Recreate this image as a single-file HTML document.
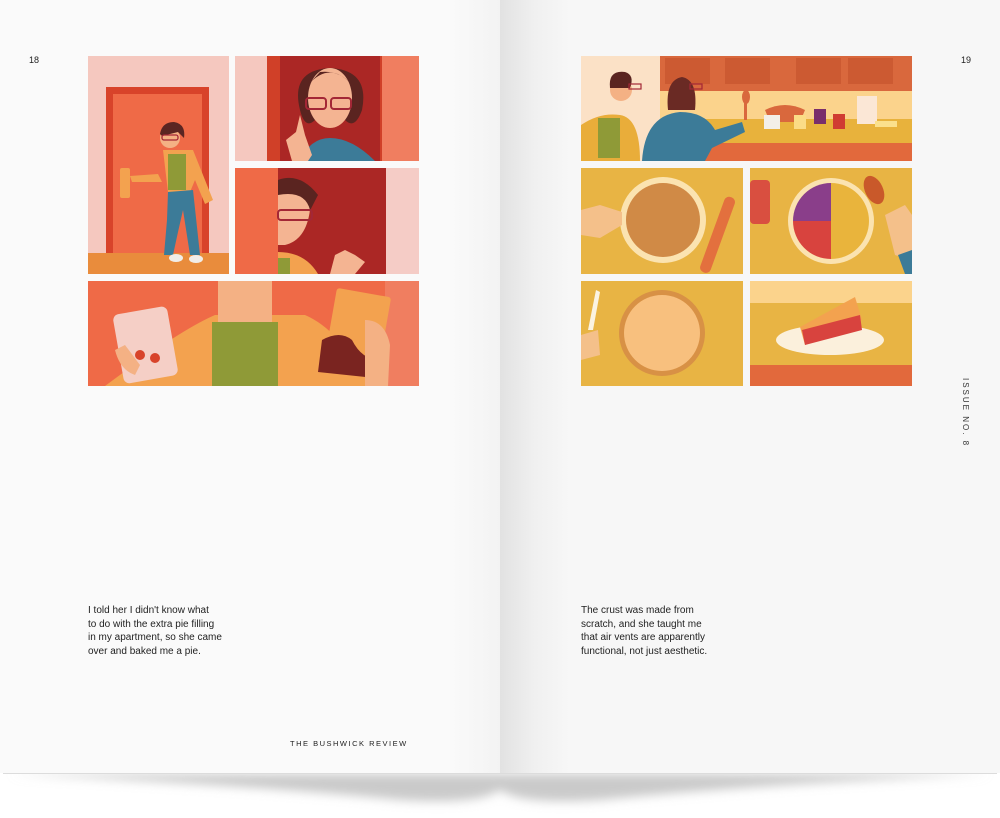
<!DOCTYPE html>
<html><head><meta charset="utf-8"><style>
html,body{margin:0;padding:0;background:#fff;width:1000px;height:818px;overflow:hidden;font-family:"Liberation Sans",sans-serif}
.abs{position:absolute}
.txt{font-size:10px;line-height:13.5px;color:#222}
</style></head><body>
<div class="abs" style="left:0;top:0;width:1000px;height:818px">
<svg width="1000" height="818" class="abs" style="left:0;top:0">
<defs>
<linearGradient id="sp" x1="0" x2="1"><stop offset="0" stop-color="#e2e2e2"/><stop offset="0.5" stop-color="#f0f0f0"/><stop offset="1" stop-color="#f7f7f7"/></linearGradient>
<linearGradient id="lp" x1="0" x2="1"><stop offset="0" stop-color="#fafafa"/><stop offset="0.9" stop-color="#fafafa"/><stop offset="1" stop-color="#f3f3f3"/></linearGradient>
<filter id="bl" x="-10%" y="-100%" width="120%" height="300%"><feGaussianBlur stdDeviation="5"/></filter>
</defs>
<!-- shadow -->
<path d="M10 774 Q250 785 400 800 Q480 805 500 790 Q520 805 600 800 Q750 785 990 774 Z" fill="#cacaca" filter="url(#bl)"/>
<rect x="0" y="0" width="500" height="773" fill="url(#lp)"/>
<rect x="500" y="0" width="500" height="773" fill="#f7f7f7"/>
<rect x="500" y="0" width="70" height="773" fill="url(#sp)"/>
<line x1="3" y1="773.5" x2="997" y2="773.5" stroke="#dcdcdc"/>

<!-- Panel A -->
<rect x="88" y="56" width="141" height="218" fill="#f5c8bf"/>
<rect x="106" y="87" width="103" height="166" fill="#d8432a"/>
<rect x="113" y="94" width="89" height="159" fill="#ef6a47"/>
<rect x="88" y="253" width="141" height="21" fill="#e98c3c"/>
<rect x="120" y="168" width="10" height="30" rx="2" fill="#f3a24f"/>
<path d="M130 176 L158 174 L162 182 L132 182Z" fill="#f3a24f"/>
<path d="M163 150 L193 150 L213 200 L205 204 L195 180 L190 192 L168 192 Z" fill="#f3a24f"/>
<rect x="168" y="154" width="18" height="36" fill="#8f9a37"/>
<path d="M168 192 L193 190 L200 255 L190 255 L183 210 L178 232 L173 255 L164 255 L167 220Z" fill="#3c7b98"/>
<ellipse cx="176" cy="258" rx="7" ry="4" fill="#f1ede8"/><ellipse cx="196" cy="259" rx="7" ry="4" fill="#f1ede8"/>
<circle cx="170" cy="138" r="10" fill="#f4b184"/>
<path d="M160 134 Q162 122 174 122 Q186 124 184 138 L178 132 L162 136Z" fill="#5b2522"/>
<rect x="162" y="135" width="16" height="5" rx="2" fill="none" stroke="#a32736" stroke-width="1.3"/>

<!-- Panel B -->
<rect x="235" y="56" width="184" height="105" fill="#f5c8bf"/>
<rect x="267" y="56" width="135" height="105" fill="#d04028"/>
<rect x="280" y="56" width="100" height="105" fill="#ab2725"/>
<rect x="382" y="56" width="37" height="105" fill="#f07e60"/>
<path d="M300 110 Q290 70 330 68 Q370 70 362 110 Q355 130 345 120 L315 120 Q305 130 300 110Z" fill="#5a2420"/>
<ellipse cx="330" cy="98" rx="22" ry="30" fill="#f4b492"/>
<path d="M308 85 Q330 60 352 85 Q340 70 320 72Z" fill="#5a2420"/>
<rect x="306" y="98" width="20" height="11" rx="3" fill="none" stroke="#a32736" stroke-width="2"/>
<rect x="331" y="98" width="20" height="11" rx="3" fill="none" stroke="#a32736" stroke-width="2"/>
<path d="M300 161 Q310 138 330 138 Q352 138 375 161Z" fill="#3c7b98"/>
<path d="M292 161 L286 140 L296 132 L300 115 L305 135 L312 155 L308 161Z" fill="#f4b492"/>

<!-- Panel C -->
<rect x="235" y="168" width="184" height="106" fill="#ef6a47"/>
<rect x="278" y="168" width="108" height="106" fill="#ab2725"/>
<rect x="386" y="168" width="33" height="106" fill="#f5ccc6"/>
<path d="M278 180 Q300 172 318 195 L300 230 L278 230Z" fill="#5a2420"/>
<path d="M278 195 Q305 190 310 210 Q306 240 285 245 L278 245Z" fill="#f4b492"/>
<rect x="278" y="210" width="34" height="10" rx="3" fill="none" stroke="#a32736" stroke-width="2"/>
<path d="M278 274 L278 252 Q305 252 318 274Z" fill="#f3a24f"/>
<rect x="278" y="258" width="12" height="16" fill="#8f9a37"/>
<path d="M330 274 L335 255 L345 250 L355 255 L365 262 L355 274Z" fill="#f4b492"/>

<!-- Panel D -->
<rect x="88" y="281" width="331" height="105" fill="#ef6a47"/>
<rect x="385" y="281" width="34" height="105" fill="#f07e60"/>
<path d="M105 386 Q180 330 215 315 L305 315 Q340 330 370 386Z" fill="#f3a24f"/>
<path d="M218 281 L272 281 L272 330 Q245 345 218 330Z" fill="#f4b184"/>
<rect x="212" y="322" width="66" height="64" fill="#8f9a37"/>
<rect x="118" y="310" width="55" height="70" rx="6" fill="#f5cfc6" transform="rotate(-10 145 345)"/>
<circle cx="155" cy="358" r="5" fill="#d8432a"/><circle cx="140" cy="355" r="5" fill="#d8432a"/>
<path d="M135 375 Q120 370 115 350 L125 345 L140 365Z" fill="#f4b184"/>
<rect x="330" y="292" width="55" height="75" rx="3" fill="#f3a24f" transform="rotate(10 357 330)"/>
<path d="M322 340 Q340 330 352 340 Q362 360 380 360 L375 378 L318 372Z" fill="#7a2420"/>
<path d="M365 320 Q385 320 390 345 L388 386 L365 386 L365 345Z" fill="#f4b184"/>

<!-- Panel E -->
<rect x="581" y="56" width="331" height="105" fill="#f3a24f"/>
<rect x="660" y="56" width="252" height="35" fill="#d9683d"/>
<rect x="665" y="58" width="45" height="26" fill="#cc5a32"/><rect x="725" y="58" width="45" height="26" fill="#cc5a32"/><rect x="796" y="58" width="45" height="26" fill="#cc5a32"/><rect x="848" y="58" width="45" height="26" fill="#cc5a32"/>
<rect x="660" y="91" width="252" height="28" fill="#fbd38c"/>
<rect x="660" y="119" width="252" height="24" fill="#e8b23c"/>
<rect x="660" y="143" width="252" height="18" fill="#e2693c"/>
<rect x="581" y="56" width="79" height="105" fill="#fbe1c6"/>
<path d="M765 110 Q785 100 805 110 L800 122 L770 122Z" fill="#d9683d"/>
<rect x="764" y="115" width="16" height="14" fill="#f3efe8"/>
<rect x="794" y="115" width="12" height="14" fill="#fbdc86"/>
<rect x="814" y="109" width="12" height="15" fill="#7a2d6b"/>
<rect x="833" y="114" width="12" height="15" fill="#d03c32"/>
<rect x="857" y="96" width="20" height="28" fill="#fbe7d6"/>
<rect x="875" y="121" width="22" height="6" fill="#fbe08c"/>
<path d="M581 161 L581 125 Q600 112 620 115 Q640 118 640 161Z" fill="#e9ad3a"/>
<rect x="598" y="118" width="22" height="40" fill="#8f9a37"/>
<circle cx="621" cy="90" r="11" fill="#f4b184"/>
<path d="M610 88 Q608 70 625 72 Q635 75 630 88Z" fill="#5a2420"/>
<path d="M642 161 Q645 115 680 112 Q705 112 715 130 L742 122 L745 132 L712 148 L705 161Z" fill="#3c7b98"/>
<path d="M668 110 Q665 80 682 77 Q698 80 695 110Z" fill="#6a2a24"/>
<rect x="690" y="84" width="12" height="5" fill="none" stroke="#a32736" stroke-width="1.2"/>
<rect x="629" y="84" width="12" height="5" fill="none" stroke="#a32736" stroke-width="1.2"/>
<ellipse cx="746" cy="97" rx="4" ry="7" fill="#d9683d"/><rect x="744" y="100" width="3" height="20" fill="#d9683d"/>

<!-- Panel F -->
<rect x="581" y="168" width="162" height="106" fill="#e8b444"/>
<circle cx="663" cy="220" r="43" fill="#fbe3b0"/>
<circle cx="663" cy="220" r="37" fill="#d08a46"/>
<path d="M581 210 L600 205 L622 212 L622 225 L600 238 L581 235Z" fill="#f4c08a"/>
<rect x="712" y="195" width="11" height="80" rx="5" fill="#e3703e" transform="rotate(20 718 235)"/>

<!-- Panel G -->
<rect x="750" y="168" width="162" height="106" fill="#e8b444"/>
<rect x="750" y="180" width="20" height="44" rx="4" fill="#d94f40"/>
<circle cx="831" cy="221" r="43" fill="#fbe3b0"/>
<path d="M831 221 L831 183 A38 38 0 0 0 793 221Z" fill="#8a3e8a"/>
<path d="M831 221 L793 221 A38 38 0 0 0 831 259Z" fill="#d8433e"/>
<path d="M831 221 L831 259 A38 38 0 0 0 869 221 A38 38 0 0 0 831 183Z" fill="#e9b43c"/>
<ellipse cx="874" cy="190" rx="9" ry="15" fill="#c9592a" transform="rotate(-25 874 190)"/>
<path d="M885 215 L905 205 L912 215 L912 260 L895 255Z" fill="#f4c08a"/>
<path d="M898 255 L912 250 L912 274 L905 274Z" fill="#3c7b98"/>

<!-- Panel H -->
<rect x="581" y="281" width="162" height="105" fill="#e8b444"/>
<circle cx="662" cy="333" r="43" fill="#d89145"/>
<circle cx="662" cy="333" r="38" fill="#f8c07e"/>
<path d="M596 290 L600 292 L593 330 L588 330Z" fill="#fbf3e2"/>
<path d="M581 335 L598 330 L600 355 L581 360Z" fill="#f4c08a"/>

<!-- Panel I -->
<rect x="750" y="281" width="162" height="105" fill="#e8b444"/>
<rect x="750" y="281" width="162" height="22" fill="#fbd38c"/>
<rect x="750" y="365" width="162" height="21" fill="#e2693c"/>
<ellipse cx="830" cy="340" rx="54" ry="15" fill="#fbf0dc"/>
<path d="M800 327 L855 297 L862 320 L805 345Z" fill="#f3a24f"/>
<path d="M802 330 L860 315 L862 330 L805 345Z" fill="#d8433e"/>
</svg>

<div class="abs" style="left:29px;top:55px;font-size:9px;color:#222">18</div>
<div class="abs" style="left:961px;top:55px;font-size:9px;color:#222">19</div>
<div class="abs" style="left:970px;top:378px;font-size:8px;letter-spacing:2px;color:#333;white-space:nowrap;transform:rotate(90deg);transform-origin:0 0">ISSUE NO. 8</div>
<div class="abs txt" style="left:88px;top:604px">I told her I didn't know what<br>to do with the extra pie filling<br>in my apartment, so she came<br>over and baked me a pie.</div>
<div class="abs txt" style="left:581px;top:604px">The crust was made from<br>scratch, and she taught me<br>that air vents are apparently<br>functional, not just aesthetic.</div>
<div class="abs" style="left:290px;top:739px;font-size:7.5px;letter-spacing:1.5px;color:#222;white-space:nowrap">THE BUSHWICK REVIEW</div>
</div>
</body></html>
